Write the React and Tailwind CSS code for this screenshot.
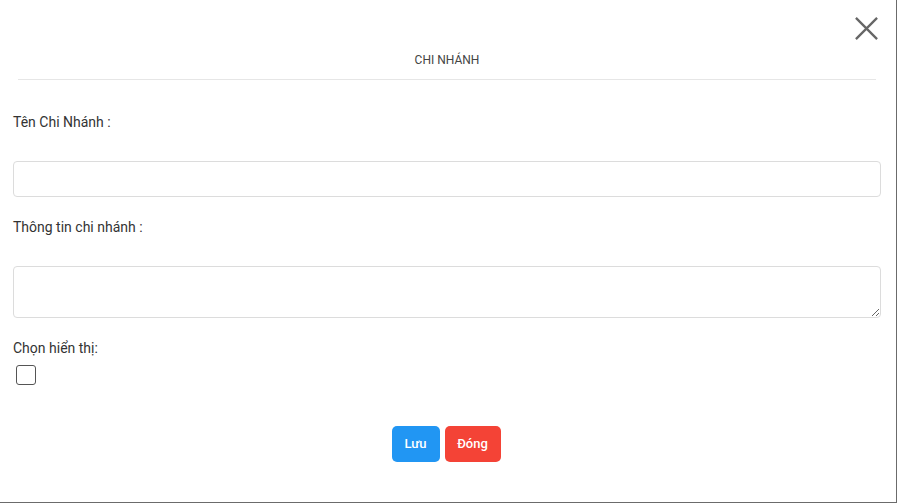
import React, { useState } from "react";

export default function App() {
  const [name, setName] = useState("");
  const [info, setInfo] = useState("");
  const [visible, setVisible] = useState(false);

  return (
    <div
      className="relative w-[897px] h-[503px] bg-white border-r border-b border-[#6b6b6b] text-[#333]"
      style={{ fontFamily: "Roboto, 'Noto Sans', sans-serif" }}
    >
      {/* close button */}
      <button type="button" className="absolute top-[16px] right-[17px] w-[25px] h-[25px] text-[#666]">
        <svg viewBox="0 0 26 26" width="25" height="25" fill="none" stroke="currentColor" strokeWidth="2.4">
          <path d="M2 2 L24 24 M24 2 L2 24" />
        </svg>
      </button>

      <div className="px-[13px] pr-[15px]">
        {/* header */}
        <div className="mx-[5px] pt-[51px] pb-[10px] border-b border-[#e6e6e6] text-center text-[12px] leading-[18px] text-[#444]">
          CHI NHÁNH
        </div>

        <form className="flex flex-col">
          <label className="mt-[32px] text-[14px] leading-[20px]">Tên Chi Nhánh :</label>
          <input
            type="text"
            value={name}
            onChange={(e) => setName(e.target.value)}
            className="mt-[29px] h-[36px] w-full border border-[#dcdcdc] rounded-[4px] px-3 text-[14px] outline-none"
          />

          <label className="mt-[20px] text-[14px] leading-[20px]">Thông tin chi nhánh :</label>
          <textarea
            value={info}
            onChange={(e) => setInfo(e.target.value)}
            className="mt-[29px] h-[52px] w-full border border-[#dcdcdc] rounded-[4px] px-3 py-2 text-[14px] outline-none block"
          />

          <label className="mt-[20px] text-[14px] leading-[20px]">Chọn hiển thị:</label>
          <div className="mt-[7px] pl-[3px]">
            <input
              type="checkbox"
              checked={visible}
              onChange={(e) => setVisible(e.target.checked)}
              className="appearance-none block w-[20px] h-[20px] border border-[#555] rounded-[3px] bg-white checked:bg-[#2196f3]"
            />
          </div>

          <div className="mt-[41px] flex justify-center gap-[5px] pr-[2px]">
            <button
              type="button"
              className="w-[48px] h-[36px] rounded-[5px] bg-[#2196f3] text-white text-[13px] font-medium"
            >
              Lưu
            </button>
            <button
              type="button"
              className="w-[56px] h-[36px] rounded-[5px] bg-[#f44336] text-white text-[13px] font-medium"
            >
              Đóng
            </button>
          </div>
        </form>
      </div>
    </div>
  );
}
